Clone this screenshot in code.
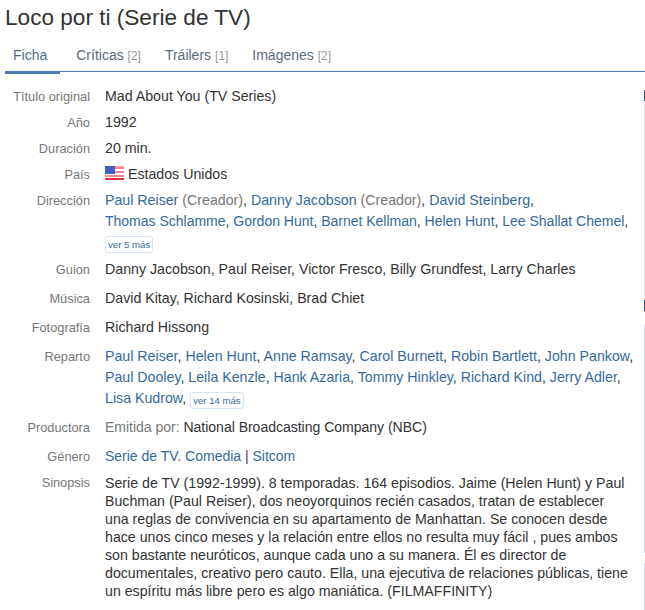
<template>
  <div class="page">
    <h1 class="title">Loco por ti (Serie de TV)</h1>
    <nav class="tabs">
      <a class="tab active">Ficha</a>
      <a class="tab">Críticas <small>[2]</small></a>
      <a class="tab">Tráilers <small>[1]</small></a>
      <a class="tab">Imágenes <small>[2]</small></a>
    </nav>
    <div class="sheet">
      <div class="label">Título original</div>
      <div class="val">Mad About You (TV Series)</div>
      <div class="label">Año</div>
      <div class="val">1992</div>
      <div class="label">Duración</div>
      <div class="val">20 min.</div>
      <div class="label">País</div>
      <div class="val">
        <svg class="flag" width="19" height="15" viewBox="0 0 19 15">
          <rect width="19" height="15" fill="#fff" />
          <rect y="1" width="19" height="2" fill="#f2878f" />
          <rect y="5" width="19" height="2" fill="#f2878f" />
          <rect y="9" width="19" height="2" fill="#f2878f" />
          <rect y="12" width="19" height="2" fill="#e8303c" />
          <rect width="19" height="1" fill="#f4a9ae" />
          <rect width="10" height="8" fill="#3f5fc4" />
        </svg>
        Estados Unidos
      </div>
      <div class="label">Dirección</div>
      <div class="val pad6">
        <a>Paul Reiser</a> <span class="gray">(Creador)</span>, <a>Danny Jacobson</a> <span class="gray">(Creador)</span>, <a>David Steinberg</a>,<br />
        <span class="tight"><a>Thomas Schlamme</a>, <a>Gordon Hunt</a>, <a>Barnet Kellman</a>, <a>Helen Hunt</a>, <a>Lee Shallat Chemel</a>,</span><br />
        <span class="more">ver 5 más</span>
      </div>
      <div class="label">Guion</div>
      <div class="val pad8">Danny Jacobson, Paul Reiser, Victor Fresco, Billy Grundfest, Larry Charles</div>
      <div class="label">Música</div>
      <div class="val pad8">David Kitay, Richard Kosinski, Brad Chiet</div>
      <div class="label">Fotografía</div>
      <div class="val pad8">Richard Hissong</div>
      <div class="label">Reparto</div>
      <div class="val pad8">
        <a>Paul Reiser</a>, <a>Helen Hunt</a>, <a>Anne Ramsay</a>, <a>Carol Burnett</a>, <a>Robin Bartlett</a>, <a>John Pankow</a>,<br />
        <a>Paul Dooley</a>, <a>Leila Kenzle</a>, <a>Hank Azaria</a>, <a>Tommy Hinkley</a>, <a>Richard Kind</a>, <a>Jerry Adler</a>,<br />
        <a>Lisa Kudrow</a>, <span class="more">ver 14 más</span>
      </div>
      <div class="label">Productora</div>
      <div class="val pad8 tight"><span class="gray">Emitida por:</span> National Broadcasting Company (NBC)</div>
      <div class="label">Género</div>
      <div class="val tight"><a>Serie de TV</a><a>. Comedia</a> <span class="pipe">|</span> <a>Sitcom</a></div>
      <div class="label">Sinopsis</div>
      <div class="val syn">Serie de TV (1992-1999). 8 temporadas. 164 episodios. Jaime (Helen Hunt) y Paul<br />
        Buchman (Paul Reiser), dos neoyorquinos recién casados, tratan de establecer<br />
        una reglas de convivencia en su apartamento de Manhattan. Se conocen desde<br />
        hace unos cinco meses y la relación entre ellos no resulta muy fácil , pues ambos<br />
        son bastante neuróticos, aunque cada uno a su manera. Él es director de<br />
        documentales, creativo pero cauto. Ella, una ejecutiva de relaciones públicas, tiene<br />
        un espíritu más libre pero es algo maniática. (FILMAFFINITY)</div>
    </div>
    <div class="edge">
      <i class="dark"></i>
      <i class="rail"></i>
      <i class="dark"></i>
      <i class="g14"></i>
      <i class="soft s228"></i>
      <i class="g10"></i>
      <i class="soft grow"></i>
    </div>
  </div>
</template>

<style>
html, body { margin: 0; background: #fff; overflow: hidden; }
</style>

<style scoped>
.page {
  position: relative;
  width: 645px;
  height: 610px;
  overflow: hidden;
  font-family: "Liberation Sans", Arial, sans-serif;
  font-size: 14.2px;
  color: #333;
}
.title {
  margin: 0;
  padding: 2px 0 0 5px;
  font-size: 22.6px;
  font-weight: 400;
  line-height: 32px;
}
.tabs {
  display: flex;
  margin: 4px 0 0 5px;
  height: 34px;
  box-sizing: border-box;
  border-bottom: 1px solid #4a7bab;
}
.tab {
  padding: 9px 8px 0;
  margin-right: 8px;
  font-size: 14px;
  color: #5b6b7a;
}
.tab small { font-size: 12px; color: #999; }
.tab.active {
  color: #4d6f8f;
  height: 24px;
  padding-right: 13px;
  border-bottom: 3px solid #4a7bab;
}
.sheet {
  display: grid;
  grid-template-columns: 90px 535px;
  column-gap: 15px;
  padding-top: 14px;
  line-height: 21px;
}
.label {
  text-align: right;
  font-size: 12.8px;
  color: #777;
}
.val { padding-bottom: 5px; white-space: nowrap; }
.val.pad6 { padding-bottom: 6px; }
.val.pad8 { padding-bottom: 8px; }
.val a { color: #36699b; }
.tight { font-size: 14.05px; letter-spacing: -0.03px; }
.gray { color: #777; }
.pipe { color: #4a2d7a; }
.flag { vertical-align: -2px; }
.more {
  display: inline-block;
  font-size: 9.6px;
  line-height: 13px;
  padding: 1px 2px;
  border: 1px solid #d3e5f5;
  border-radius: 3px;
  color: #36699b;
  vertical-align: -1px;
}
.val.syn { line-height: 18px; padding-top: 2px; padding-bottom: 0; }
.edge {
  position: absolute;
  right: 0;
  top: 90px;
  bottom: 0;
  width: 1px;
  display: flex;
  flex-direction: column;
}
.edge i { display: block; }
.dark { height: 11px; background: #2a5a8f; }
.rail { height: 199px; background: #e2e2e2; }
.g14 { height: 14px; }
.g10 { height: 10px; }
.soft { background: #c6d9ec; }
.s228 { height: 228px; }
.grow { flex: 1; }
</style>
